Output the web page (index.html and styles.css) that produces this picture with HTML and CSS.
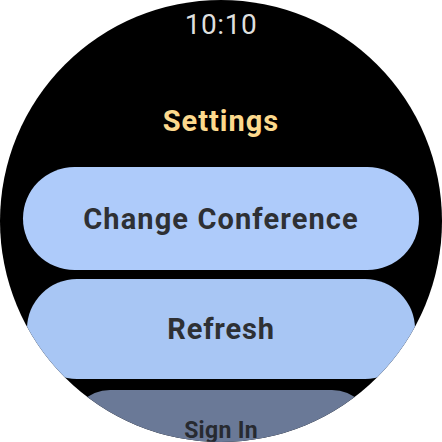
FILE: index.html
```html
<!DOCTYPE html>
<html>
<head>
<meta charset="utf-8">
<link rel="stylesheet" href="styles.css">
</head>
<body>
<div class="screen">
  <div class="time">10:10</div>
  <div class="title">Settings</div>
  <div class="list">
    <div class="chip chip-1">Change Conference</div>
    <div class="chip chip-2">Refresh</div>
    <div class="chip chip-3">Sign In</div>
  </div>
</div>
</body>
</html>
```
FILE: styles.css
```css
html, body {
  margin: 0;
  padding: 0;
  background: #ffffff;
}
.screen {
  width: 442px;
  height: 442px;
  border-radius: 50%;
  background: #000000;
  overflow: hidden;
  display: flex;
  flex-direction: column;
  align-items: center;
  padding-top: 11px;
  box-sizing: border-box;
  font-family: Roboto, "Liberation Sans", sans-serif;
}
.time {
  font-size: 28px;
  line-height: 28px;
  height: 28px;
  color: #dedede;
  letter-spacing: 0.6px;
}
.title {
  margin-top: 68px;
  font-size: 29px;
  line-height: 29px;
  height: 29px;
  font-weight: 700;
  color: #fcd98d;
  letter-spacing: 1px;
}
.list {
  margin-top: 31px;
  display: flex;
  flex-direction: column;
  align-items: center;
}
.chip {
  display: flex;
  align-items: center;
  justify-content: center;
  font-weight: 700;
  color: #2e3034;
  flex: none;
}
.chip-1 {
  width: 396px;
  height: 103px;
  border-radius: 52px;
  background: #aecbfa;
  font-size: 29px;
  letter-spacing: 1.1px;
}
.chip-2 {
  margin-top: 9px;
  width: 388px;
  height: 100px;
  border-radius: 50px;
  background: #a8c6f4;
  font-size: 29px;
  letter-spacing: 0.8px;
}
.chip-3 {
  margin-top: 11px;
  width: 302px;
  height: 80px;
  border-radius: 40px;
  background: #6a7997;
  font-size: 23px;
  color: #272a30;
  align-items: flex-start;
  padding-top: 27px;
  box-sizing: border-box;
  letter-spacing: 0.3px;
}
```
